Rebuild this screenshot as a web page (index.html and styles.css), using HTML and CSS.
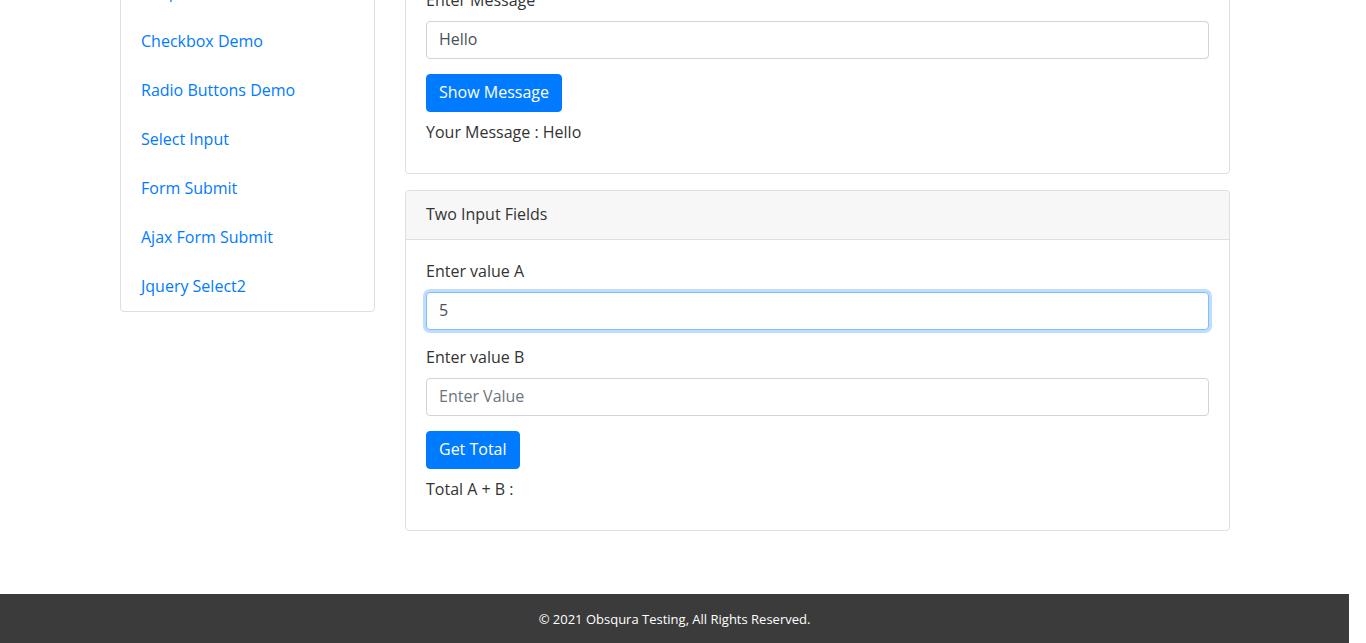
FILE: index.html
```html
<!DOCTYPE html>
<html lang="en">
<head>
<meta charset="utf-8">
<title>Obsqura Testing - Simple Form Demo</title>
<link rel="stylesheet" href="styles.css">
</head>
<body>
<div class="page">
  <div class="container">
    <aside class="sidebar">
      <ul class="list-group">
        <li class="list-item"><a href="#">Input Form</a></li>
        <li class="list-item"><a href="#">Simple Form Demo</a></li>
        <li class="list-item"><a href="#">Checkbox Demo</a></li>
        <li class="list-item"><a href="#">Radio Buttons Demo</a></li>
        <li class="list-item"><a href="#">Select Input</a></li>
        <li class="list-item"><a href="#">Form Submit</a></li>
        <li class="list-item"><a href="#">Ajax Form Submit</a></li>
        <li class="list-item"><a href="#">Jquery Select2</a></li>
      </ul>
    </aside>
    <main class="main">
      <section class="card">
        <div class="card-header">Single Input Field</div>
        <div class="card-body">
          <div class="form-group last">
            <label class="label" for="msg">Enter Message</label>
            <input class="form-control" id="msg" type="text" value="Hello">
          </div>
          <button class="btn" type="button">Show Message</button>
          <div class="result">Your Message : Hello</div>
        </div>
      </section>
      <section class="card">
        <div class="card-header">Two Input Fields</div>
        <div class="card-body">
          <div class="form-group">
            <label class="label" for="va">Enter value A</label>
            <input class="form-control focused" id="va" type="text" value="5">
          </div>
          <div class="form-group last">
            <label class="label" for="vb">Enter value B</label>
            <input class="form-control" id="vb" type="text" placeholder="Enter Value">
          </div>
          <button class="btn" type="button">Get Total</button>
          <div class="result">Total A + B :</div>
        </div>
      </section>
    </main>
  </div>
  <footer class="footer">© 2021 Obsqura Testing, All Rights Reserved.</footer>
</div>
</body>
</html>
```

FILE: styles.css
```css
html, body {
  margin: 0;
  padding: 0;
  overflow: hidden;
  background: #fff;
}
body {
  font-family: "Open Sans", "Liberation Sans", sans-serif;
  font-size: 16px;
  line-height: 24px;
  color: #333;
}
.page {
  width: 1349px;
}
.container {
  display: flex;
  align-items: flex-start;
  gap: 30px;
  padding-left: 120px;
  margin-top: -81px;
}
.sidebar {
  width: 253px;
  border: 1px solid #dfdfdf;
  border-radius: 4px;
  margin-top: -1px;
}
.list-group {
  list-style: none;
  margin: 0;
  padding: 0 0 1px;
  display: flex;
  flex-direction: column;
  gap: 1px;
}
.list-item {
  padding: 12px 20px;
}
.list-item a {
  color: #007bff;
  text-decoration: none;
}
.main {
  width: 825px;
  display: flex;
  flex-direction: column;
  gap: 16px;
}
.card {
  border: 1px solid #dfdfdf;
  border-radius: 4px;
}
.card-header {
  background: #f7f7f7;
  border-bottom: 1px solid #dfdfdf;
  padding: 11px 20px 13px;
  border-radius: 4px 4px 0 0;
}
.card-body {
  padding: 20px 20px 29px;
}
.form-group {
  margin-bottom: 16px;
}
.form-group.last {
  margin-bottom: 15px;
}
.label {
  display: block;
  margin-top: -1px;
  margin-bottom: 9px;
}
.form-control {
  display: block;
  box-sizing: border-box;
  width: 100%;
  height: 38px;
  padding: 5px 12px 7px;
  font-family: inherit;
  font-size: 16px;
  line-height: 24px;
  color: #495057;
  background: #fff;
  border: 1px solid #ced4da;
  border-radius: 4px;
  outline: none;
}
.form-control::placeholder {
  color: #6c757d;
}
.form-control.focused {
  border-color: #80bdff;
  box-shadow: 0 0 0 3px rgba(0, 123, 255, 0.25);
}
.btn {
  display: block;
  height: 38px;
  padding: 5px 12px 7px;
  font-family: inherit;
  font-size: 16px;
  line-height: 24px;
  color: #fff;
  background: #007bff;
  border: 1px solid #007bff;
  border-radius: 4px;
}
.result {
  margin-top: 8px;
}
.footer {
  margin-top: 63px;
  background: #3b3b3b;
  color: #fff;
  text-align: center;
  font-size: 13px;
  line-height: 20px;
  padding: 15px 0 14px;
}
```
